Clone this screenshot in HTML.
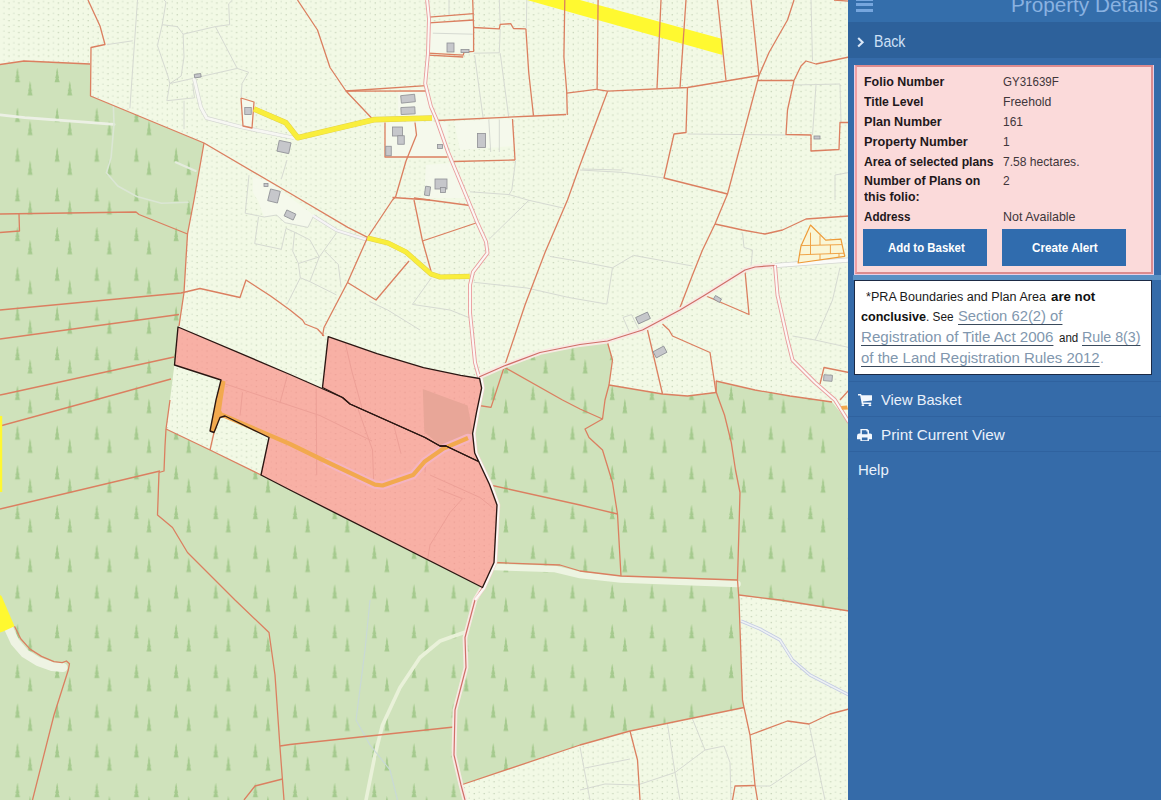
<!DOCTYPE html>
<html lang="en"><head><meta charset="utf-8"><title>Property Details</title>
<style>
html,body{margin:0;padding:0;}
body{width:1161px;height:800px;overflow:hidden;position:relative;background:#f2f9e5;font-family:"Liberation Sans",sans-serif;}
#panel{position:absolute;left:848px;top:0;width:313px;height:800px;background:#356ba9;overflow:hidden;}
#panel .t{position:absolute;white-space:nowrap;transform-origin:0 50%;display:block;}
#panel .box{position:absolute;box-sizing:border-box;}
</style></head><body>
<svg width="849" height="800" viewBox="0 0 849 800" style="position:absolute;left:0;top:0;display:block">
<defs>
<pattern id="dots" width="9.9" height="5.9" patternUnits="userSpaceOnUse" x="6.7" y="0.4">
<rect x="1.6" y="2" width="1.4" height="1.2" fill="#c5d4b7"/><rect x="6.5" y="0.6" width="1.4" height="1.2" fill="#d6e1cb"/>
</pattern>
<pattern id="pdots" width="9.9" height="5.9" patternUnits="userSpaceOnUse" x="6.7" y="0.4"><rect x="1.6" y="2" width="1.4" height="1.2" fill="#eb9f95"/><rect x="6.5" y="0.6" width="1.4" height="1.2" fill="#f2a89e"/></pattern>
<pattern id="trees" width="39.65" height="39.72" patternUnits="userSpaceOnUse" x="-2.5" y="28.4">
<path d="M20,-0.5 L21.2,5.2 L20.7,5.2 L22,9.9 L21.3,9.9 L22.6,14.2 L17.4,14.2 L18.7,9.9 L18,9.9 L19.3,5.2 L18.8,5.2 Z" fill="#a5ca8e"/>
<path d="M32.6,12.6 L33.8,18.3 L33.3,18.3 L34.6,23 L33.9,23 L35.2,27.3 L30,27.3 L31.3,23 L30.6,23 L31.9,18.3 L31.4,18.3 Z" fill="#a5ca8e"/>
</pattern>
</defs>
<rect width="849" height="800" fill="#f2f9e5"/>
<rect width="849" height="800" fill="url(#dots)"/>
<polygon points="385,122.5 447.5,122 447.5,157 385,157" fill="#f5f9ec"/>
<polygon points="429,22.5 474,20 474,52.5 429,52.5" fill="#f5f9ec"/>
<polygon points="454,121 512.5,119 514,146 460,150" fill="#f5f9ec"/>
<polygon points="398,92 424,88 432,117 398,117" fill="#f5f9ec"/>
<polygon points="252.8,177 268,181 313.6,215 307.9,227.4 285,222.7 276.5,215 264.2,217 258.5,201.8 252.8,192.3" fill="#f5f9ec"/>
<polygon points="426,165 452,163 466,198 424,198" fill="#f5f9ec"/>
<polygon points="241,98 254,102 252,128 243,126" fill="#f5f9ec"/>
<polygon points="0,64.5 24,61 90,64 90.5,96 204,143 194,200 187.5,234 184,292.5 179,326 175,360 170,400 166,429 210,450 261,475 290,490 482.5,587.5 494,562.5 497,505 490,485 479,461 472,434 478,406 481,390 480,378 482,376 504,366 540,352.5 580,345 607.5,342 612.5,360 609,385 662.5,394 687.5,396 716,392.5 716,381 755,390 790,396 832,402 849,423 849,611 770,600 739,595 739,600 742.5,700 744,707.5 630,731 580,745 461,785 465,800 0,800" fill="#cfe2bb"/>
<polygon points="0,64.5 24,61 90,64 90.5,96 204,143 194,200 187.5,234 184,292.5 179,326 175,360 170,400 166,429 210,450 261,475 290,490 482.5,587.5 494,562.5 497,505 490,485 479,461 472,434 478,406 481,390 480,378 482,376 504,366 540,352.5 580,345 607.5,342 612.5,360 609,385 662.5,394 687.5,396 716,392.5 716,381 755,390 790,396 832,402 849,423 849,611 770,600 739,595 739,600 742.5,700 744,707.5 630,731 580,745 461,785 465,800 0,800" fill="url(#trees)"/>
<polyline points="137.5,0 129.9,108.3" fill="none" stroke="#d6dad2" stroke-width="1" />
<polyline points="164.1,0 166,2 162.2,24.7 157.4,45.6 167.9,76 169.8,83.6 166.9,100.7 194.5,97.8 192.6,83.6" fill="none" stroke="#d6dad2" stroke-width="1" />
<polyline points="162.2,24.7 177.4,26.6 183.1,34.2 184,57 181.2,76 169.8,83.6" fill="none" stroke="#d6dad2" stroke-width="1" />
<polyline points="183.1,34.2 215.4,26.6 229.6,24.7 228.7,3.8 232.5,0" fill="none" stroke="#d6dad2" stroke-width="1" />
<polyline points="215.4,26.6 237.2,68.4 248.6,72.2 242,83.6 241,97.8" fill="none" stroke="#d6dad2" stroke-width="1" />
<polyline points="169.8,83.6 237.2,68.4" fill="none" stroke="#d6dad2" stroke-width="1" />
<polyline points="184,100.7 184,129.2" fill="none" stroke="#d6dad2" stroke-width="1" />
<polyline points="107.1,44.6 132.7,40.8" fill="none" stroke="#d6dad2" stroke-width="1" />
<polyline points="811,0 812.5,61" fill="none" stroke="#d6dad2" stroke-width="1" />
<polyline points="473.6,53.2 499.3,52.8 500.2,28.9" fill="none" stroke="#d6dad2" stroke-width="1" />
<polyline points="474.6,55.1 483.1,117.8" fill="none" stroke="#d6dad2" stroke-width="1" />
<polyline points="499.3,0 500.2,24.3" fill="none" stroke="#d6dad2" stroke-width="1" />
<polyline points="500.2,53.2 508.8,117.8" fill="none" stroke="#d6dad2" stroke-width="1" />
<polyline points="526.8,0 526.3,28.5" fill="none" stroke="#d6dad2" stroke-width="1" />
<polyline points="488.8,119.7 490.7,152" fill="none" stroke="#d6dad2" stroke-width="1" />
<polyline points="499.3,119.7 499.3,152" fill="none" stroke="#d6dad2" stroke-width="1" />
<polyline points="449,0 449,15" fill="none" stroke="#d6dad2" stroke-width="1" />
<polyline points="432.8,33.2 472.7,34.2" fill="none" stroke="#d6dad2" stroke-width="1" />
<polyline points="794,85 840,84 841,122" fill="none" stroke="#d6dad2" stroke-width="1" />
<polyline points="816,85 812.5,135" fill="none" stroke="#d6dad2" stroke-width="1" />
<polyline points="687.5,134 786,135" fill="none" stroke="#d6dad2" stroke-width="1" />
<polyline points="580,170 625,172.5 664,178" fill="none" stroke="#d6dad2" stroke-width="1" />
<polyline points="835,200 835,175 849,172.5" fill="none" stroke="#d6dad2" stroke-width="1" />
<polyline points="580,261.5 612.5,267.8 633.4,255.4 692.5,266" fill="none" stroke="#d6dad2" stroke-width="1" />
<polyline points="742.5,232.5 744,247.5 752.5,250 751,266" fill="none" stroke="#d6dad2" stroke-width="1" />
<polyline points="840,267.5 832.5,300 817.5,335 815,340 792.5,336" fill="none" stroke="#d6dad2" stroke-width="1" />
<polyline points="815,340 849,347.5" fill="none" stroke="#d6dad2" stroke-width="1" />
<polyline points="667.5,724 675,772.5 680,800" fill="none" stroke="#d6dad2" stroke-width="1" />
<polyline points="692.5,719 705,750" fill="none" stroke="#d6dad2" stroke-width="1" />
<polyline points="675,772.5 705,750 724,746 730,762.5 731,800" fill="none" stroke="#d6dad2" stroke-width="1" />
<polyline points="580,747 590,800" fill="none" stroke="#d6dad2" stroke-width="1" />
<polyline points="585,768 630,759" fill="none" stroke="#d6dad2" stroke-width="1" />
<polyline points="580,790 605,784 637.5,785 675,772.5" fill="none" stroke="#d6dad2" stroke-width="1" />
<polyline points="809,724 825,800" fill="none" stroke="#d6dad2" stroke-width="1" />
<polyline points="755,786 770,786 815,756" fill="none" stroke="#d6dad2" stroke-width="1" />
<polyline points="287,160 281.3,179" fill="none" stroke="#d6dad2" stroke-width="1" />
<polyline points="249,175.2 245.2,213.2 264.2,217 276.5,215 285,222.7 307.9,227.4 313.6,216" fill="none" stroke="#d6dad2" stroke-width="1" />
<polyline points="258.5,217 254.7,243.6 281.3,249.3 286,228.4" fill="none" stroke="#d6dad2" stroke-width="1" />
<polyline points="286,228.4 294.6,232.2 309.8,239.8 319.3,256.9" fill="none" stroke="#d6dad2" stroke-width="1" />
<polyline points="294.6,232.2 292.7,251.2 298.4,263.5 319.3,256.9 336.4,233.1" fill="none" stroke="#d6dad2" stroke-width="1" />
<polyline points="298.4,263.5 300.3,277.8 287,304.4" fill="none" stroke="#d6dad2" stroke-width="1" />
<polyline points="319.3,256.9 309.8,281.6 336.4,294.9" fill="none" stroke="#d6dad2" stroke-width="1" />
<polyline points="325,251.2 338.3,264.5 341.1,287.3" fill="none" stroke="#d6dad2" stroke-width="1" />
<polyline points="300.3,277.8 309.8,281.6" fill="none" stroke="#d6dad2" stroke-width="1" />
<polyline points="369.6,301.5 387.7,310 420,330" fill="none" stroke="#d6dad2" stroke-width="1" />
<polyline points="431.4,277.8 412.4,304.4 450,310 470,318" fill="none" stroke="#d6dad2" stroke-width="1" />
<polyline points="515.6,160.4 511.8,190 509,194.6" fill="none" stroke="#d6dad2" stroke-width="1" />
<polyline points="470,191.8 509,194.6 528.9,200.3 563.1,208" fill="none" stroke="#d6dad2" stroke-width="1" />
<polyline points="528.9,200.3 489,239.3" fill="none" stroke="#d6dad2" stroke-width="1" />
<polyline points="549.8,256.4 580,261.5" fill="none" stroke="#d6dad2" stroke-width="1" />
<polyline points="612.5,267.8 606.8,304.1 568.8,297.5 527,288 473.8,282.3" fill="none" stroke="#d6dad2" stroke-width="1" />
<polyline points="582.1,169 622,170" fill="none" stroke="#d6dad2" stroke-width="1" />
<polyline points="623,317.4 631.5,314.6 639,329.8 629.6,332.6 623,317.4" fill="none" stroke="#d6dad2" stroke-width="1" />
<polyline points="194.2,79 200.9,107.5 206.6,118 242.7,127.4 294,137.9" fill="none" stroke="#d4d6d2" stroke-width="4.0" stroke-linejoin="round"/>
<polyline points="194.2,79 200.9,107.5 206.6,118 242.7,127.4 294,137.9" fill="none" stroke="#f7f7f3" stroke-width="2.8" stroke-linecap="round" stroke-linejoin="round"/>
<polyline points="0,114.8 24.7,117.7 81.7,121.9 114,124.3" fill="none" stroke="#ecf0e5" stroke-width="2.8" stroke-linecap="round" stroke-linejoin="round"/>
<polyline points="113.4,106.3 114,124.3 111.1,157.6 106.4,172.8 117.8,186 136.8,196.5 161.5,203.2 188,202.2" fill="none" stroke="#dbe6d4" stroke-width="1.6" stroke-linecap="round" stroke-linejoin="round"/>
<polyline points="175.7,162.3 195.7,170.9" fill="none" stroke="#e4ebdd" stroke-width="2.2" stroke-linecap="round" stroke-linejoin="round"/>
<polyline points="775,265.5 849,260" fill="none" stroke="#d4d6d2" stroke-width="4.8" stroke-linejoin="round"/>
<polyline points="775,265.5 849,260" fill="none" stroke="#fbfbf8" stroke-width="3.6" stroke-linecap="round" stroke-linejoin="round"/>
<polyline points="494,567 555,569 580,575 621,579.5 737.5,584" fill="none" stroke="#edf4e1" stroke-width="6.5" stroke-linecap="round" stroke-linejoin="round"/>
<polyline points="9,629 15,642 25,653.5 38,661.5 52,666.5 63,667.5" fill="none" stroke="#eef3e3" stroke-width="9" stroke-linecap="round" stroke-linejoin="round"/>
<polyline points="464,632.5 440,641 420,657.5 400,687.5 382.5,725 375,755 366,800" fill="none" stroke="#e9f1d9" stroke-width="3.6" stroke-linecap="round" stroke-linejoin="round"/>
<polyline points="313.6,216 336.4,230.3 366.8,239.8" fill="none" stroke="#d4d6d2" stroke-width="3.4000000000000004" stroke-linejoin="round"/>
<polyline points="313.6,216 336.4,230.3 366.8,239.8" fill="none" stroke="#f6f4f6" stroke-width="2.2" stroke-linecap="round" stroke-linejoin="round"/>
<polyline points="741,621 760,629 780,640 792.5,660 810,675 849,695" fill="none" stroke="#c4cbe3" stroke-width="3.2" stroke-linejoin="round"/>
<polyline points="741,621 760,629 780,640 792.5,660 810,675 849,695" fill="none" stroke="#eef2f4" stroke-width="1.5000000000000002" stroke-linejoin="round"/>
<polyline points="370,600 365,650 356,720 370,745 390,770 397.5,800" fill="none" stroke="#c9d9d6" stroke-width="1.2" stroke-linejoin="round"/>
<polygon points="527,0 580,15 722.5,55 722.5,39 580,0" fill="#fff930"/>
<polyline points="88,0 100,26 105,44.5 91,47.5 90.5,96 204,143 290,193.3 347.8,227.4 367.6,237.3" fill="none" stroke="#db7f60" stroke-width="1.3" stroke-linejoin="round"/>
<polyline points="0,64.5 24,61 90,64" fill="none" stroke="#db7f60" stroke-width="1.3" stroke-linejoin="round"/>
<polyline points="204,143 194,200 187.5,234 184,292.5 179,326" fill="none" stroke="#db7f60" stroke-width="1.3" stroke-linejoin="round"/>
<polyline points="241,98 254,102 252,128 243,126 241,98" fill="none" stroke="#db7f60" stroke-width="1.3" stroke-linejoin="round"/>
<polyline points="297.5,0 317.5,30 330,67.5 346,91 372.5,119" fill="none" stroke="#db7f60" stroke-width="1.3" stroke-linejoin="round"/>
<polyline points="346,91 426,85.7" fill="none" stroke="#db7f60" stroke-width="1.3" stroke-linejoin="round"/>
<polyline points="346,91.2 427.4,91" fill="none" stroke="#db7f60" stroke-width="1.3" stroke-linejoin="round"/>
<polyline points="385,122.5 385,157 447.5,157" fill="none" stroke="#db7f60" stroke-width="1.3" stroke-linejoin="round"/>
<polyline points="415,122.5 416.5,135 406,161 395.7,196.5 392.5,200 367.5,237.5 347.5,282.5 324,327.5 322.5,336" fill="none" stroke="#db7f60" stroke-width="1.3" stroke-linejoin="round"/>
<polyline points="437.5,120.5 534,116 566,114.5" fill="none" stroke="#db7f60" stroke-width="1.3" stroke-linejoin="round"/>
<polyline points="566.7,93.1 596.2,89.3" fill="none" stroke="#db7f60" stroke-width="1.3" stroke-linejoin="round"/>
<polyline points="512.5,119 515,160" fill="none" stroke="#db7f60" stroke-width="1.3" stroke-linejoin="round"/>
<polyline points="454,161.5 515,160" fill="none" stroke="#db7f60" stroke-width="1.3" stroke-linejoin="round"/>
<polyline points="525.9,28.9 528.7,72.2 533.5,115.9" fill="none" stroke="#db7f60" stroke-width="1.3" stroke-linejoin="round"/>
<polyline points="564.8,0 563.9,57 566.7,91.2 567.3,114.9" fill="none" stroke="#db7f60" stroke-width="1.3" stroke-linejoin="round"/>
<polyline points="472.7,0 473.6,27.5 499.3,28.9 500.2,24.3 510.7,23.7 513.5,28.5 525.9,28.9" fill="none" stroke="#db7f60" stroke-width="1.3" stroke-linejoin="round"/>
<polyline points="429,17.1 473.6,13.7" fill="none" stroke="#db7f60" stroke-width="1.3" stroke-linejoin="round"/>
<polyline points="429,22.8 473.6,20" fill="none" stroke="#db7f60" stroke-width="1.3" stroke-linejoin="round"/>
<polyline points="473.6,27.5 473.6,51.3 464.1,52.2 463.2,55.1 428,53.2" fill="none" stroke="#db7f60" stroke-width="1.3" stroke-linejoin="round"/>
<polyline points="428,55.2 463.2,57" fill="none" stroke="#db7f60" stroke-width="1.3" stroke-linejoin="round"/>
<polyline points="580,165 567.5,200 545,252.5 525,305 504.2,367 491,407.4 479,405.5" fill="none" stroke="#db7f60" stroke-width="1.3" stroke-linejoin="round"/>
<polyline points="392.5,197.5 430,200" fill="none" stroke="#db7f60" stroke-width="1.3" stroke-linejoin="round"/>
<polyline points="598.1,0 597.1,89.3" fill="none" stroke="#db7f60" stroke-width="1.3" stroke-linejoin="round"/>
<polyline points="596.2,89.3 607.6,91.2 687.5,87.5 759,75.5" fill="none" stroke="#db7f60" stroke-width="1.3" stroke-linejoin="round"/>
<polyline points="758,80.5 794,80.5" fill="none" stroke="#db7f60" stroke-width="1.3" stroke-linejoin="round"/>
<polyline points="607.6,91.2 580,165" fill="none" stroke="#db7f60" stroke-width="1.3" stroke-linejoin="round"/>
<polyline points="661,0 657,88.5" fill="none" stroke="#db7f60" stroke-width="1.3" stroke-linejoin="round"/>
<polyline points="686,0 680,88" fill="none" stroke="#db7f60" stroke-width="1.3" stroke-linejoin="round"/>
<polyline points="717.5,0 726,80.5" fill="none" stroke="#db7f60" stroke-width="1.3" stroke-linejoin="round"/>
<polyline points="751,0 759,75.5" fill="none" stroke="#db7f60" stroke-width="1.3" stroke-linejoin="round"/>
<polyline points="794,0 787.5,20 769,52.5 759,75.5 727.5,194 725,200 715,224 702.5,250 692.5,275 680,307.5" fill="none" stroke="#db7f60" stroke-width="1.3" stroke-linejoin="round"/>
<polyline points="687.5,87.5 686,132.5 674,134 664,178 727.5,194" fill="none" stroke="#db7f60" stroke-width="1.3" stroke-linejoin="round"/>
<polyline points="794,80.5 801,66 806,61 816,64 849,57" fill="none" stroke="#db7f60" stroke-width="1.3" stroke-linejoin="round"/>
<polyline points="794,80.5 787.5,110 786,134.5 811,135 811,151 839,149.5 840,122.5 849,122.5" fill="none" stroke="#db7f60" stroke-width="1.3" stroke-linejoin="round"/>
<polyline points="0,214 136,212 139,214.5 187.5,234" fill="none" stroke="#db7f60" stroke-width="1.3" stroke-linejoin="round"/>
<polyline points="19,214 19.5,231 0,232.5" fill="none" stroke="#db7f60" stroke-width="1.3" stroke-linejoin="round"/>
<polyline points="0,310 181,293 200,288.5 240,297.5 246,280 270.6,296 290,310 302.5,320 305,324 317.5,329 324,336" fill="none" stroke="#db7f60" stroke-width="1.3" stroke-linejoin="round"/>
<polyline points="0,339 179,314.5" fill="none" stroke="#db7f60" stroke-width="1.3" stroke-linejoin="round"/>
<polyline points="0,395 5,394 174,357" fill="none" stroke="#db7f60" stroke-width="1.3" stroke-linejoin="round"/>
<polyline points="0,426 95,400 171,379" fill="none" stroke="#db7f60" stroke-width="1.3" stroke-linejoin="round"/>
<polyline points="414,200 422.5,241 431,271" fill="none" stroke="#db7f60" stroke-width="1.3" stroke-linejoin="round"/>
<polyline points="414,198 470,205.5" fill="none" stroke="#db7f60" stroke-width="1.3" stroke-linejoin="round"/>
<polyline points="422.5,241 477.5,222.5" fill="none" stroke="#db7f60" stroke-width="1.3" stroke-linejoin="round"/>
<polyline points="347.5,282.5 376,300 409,261" fill="none" stroke="#db7f60" stroke-width="1.3" stroke-linejoin="round"/>
<polyline points="504,367 562.5,400 580,409 602.5,419" fill="none" stroke="#db7f60" stroke-width="1.3" stroke-linejoin="round"/>
<polyline points="715,224 742.5,230 765,234 782.5,230 806,219 849,216" fill="none" stroke="#db7f60" stroke-width="1.3" stroke-linejoin="round"/>
<polyline points="745,271 749,314.5 705,295.5" fill="none" stroke="#db7f60" stroke-width="1.3" stroke-linejoin="round"/>
<polyline points="647.5,330 662.5,394" fill="none" stroke="#db7f60" stroke-width="1.3" stroke-linejoin="round"/>
<polyline points="662.5,324 669,330 672.5,336 710,352.5 716,392.5" fill="none" stroke="#db7f60" stroke-width="1.3" stroke-linejoin="round"/>
<polyline points="607.5,342.5 612.5,360 609,385 605,400 602.5,419 585,429 589,437.5 602.5,450 612.5,482.5 617.5,514 621,576" fill="none" stroke="#db7f60" stroke-width="1.3" stroke-linejoin="round"/>
<polyline points="609,385 662.5,394 687.5,396 716,392.5" fill="none" stroke="#db7f60" stroke-width="1.3" stroke-linejoin="round"/>
<polyline points="716,381 755,390 790,396 832,402" fill="none" stroke="#db7f60" stroke-width="1.3" stroke-linejoin="round"/>
<polyline points="820,384 824,367.5 849,372.5" fill="none" stroke="#db7f60" stroke-width="1.3" stroke-linejoin="round"/>
<polyline points="849,390 840,400" fill="none" stroke="#db7f60" stroke-width="1.3" stroke-linejoin="round"/>
<polyline points="834,0 849,1.2" fill="none" stroke="#db7f60" stroke-width="1.3" stroke-linejoin="round"/>
<polyline points="170,400 166,429 165,446 164,471 159,472.5 157.5,515 172.5,527.5 187.5,552.5 235,600 269,632.5 275,675 280,747.5 284,800" fill="none" stroke="#db7f60" stroke-width="1.3" stroke-linejoin="round"/>
<polyline points="160,471 0,509" fill="none" stroke="#db7f60" stroke-width="1.3" stroke-linejoin="round"/>
<polyline points="166,429 210,450 261,475" fill="none" stroke="#db7f60" stroke-width="1.3" stroke-linejoin="round"/>
<polyline points="210,450 214,432.5" fill="none" stroke="#db7f60" stroke-width="1.3" stroke-linejoin="round"/>
<polyline points="490,485 580,505 617.5,514" fill="none" stroke="#db7f60" stroke-width="1.3" stroke-linejoin="round"/>
<polyline points="494,562.5 560,565 580,571 621,576 737.5,580" fill="none" stroke="#db7f60" stroke-width="1.3" stroke-linejoin="round"/>
<polyline points="716.2,380.7 716.2,392 719,400 724.5,415 731.3,442.7 735.5,470 740,492.5 737.5,580 739,600 742.5,700 744,707.5 750,735 755,785 757.5,800" fill="none" stroke="#db7f60" stroke-width="1.3" stroke-linejoin="round"/>
<polyline points="739,595 780,600 849,611" fill="none" stroke="#db7f60" stroke-width="1.3" stroke-linejoin="round"/>
<polyline points="280,746 290,744.5 454,727" fill="none" stroke="#db7f60" stroke-width="1.3" stroke-linejoin="round"/>
<polyline points="282.5,779 255,786 244,800" fill="none" stroke="#db7f60" stroke-width="1.3" stroke-linejoin="round"/>
<polyline points="14.5,626.3 20.7,638.8 30,649.1 41.5,656.4 54,661.6 62.2,662.6 66.4,661 69.5,663.7 68.3,670 54,715 32.5,800" fill="none" stroke="#db7f60" stroke-width="1.3" stroke-linejoin="round"/>
<polyline points="461,785 580,745 630,731 744,707.5" fill="none" stroke="#db7f60" stroke-width="1.3" stroke-linejoin="round"/>
<polyline points="630,731 637.5,760 640,800" fill="none" stroke="#db7f60" stroke-width="1.3" stroke-linejoin="round"/>
<polyline points="750,735 787.5,721 809,724 830,714 849,709" fill="none" stroke="#db7f60" stroke-width="1.3" stroke-linejoin="round"/>
<polyline points="732.5,800 735,786 755,785.5" fill="none" stroke="#db7f60" stroke-width="1.3" stroke-linejoin="round"/>
<polyline points="427.1,0 429,19 428,53.2 425.2,83.6 430.9,106.4 436.6,119.7 448,152 469.6,204 477,222 486,241.7 487.5,253 473,272 470,285 470,312.5 475,362.5 479,377" fill="none" stroke="#e99d9d" stroke-width="3.9" stroke-linejoin="round"/>
<polyline points="479,377 504,366 540,352.5 580,344.5 607.5,341 642.5,330 680,310 705,295 745,270 755,267 775,265.5" fill="none" stroke="#f8e9e3" stroke-width="4.8" stroke-linejoin="round"/>
<polyline points="775,265.5 777.5,295 787.5,340 792.5,360 815,382.5 835,400 849,422.5" fill="none" stroke="#e99d9d" stroke-width="3.9" stroke-linejoin="round"/>
<polyline points="482.5,587.5 475,600 465,637.5 466,667.5 455,710 454,755 461,785 465,800" fill="none" stroke="#f8e9e3" stroke-width="4.8" stroke-linejoin="round"/>
<polyline points="481.2,378 483,388 478,411.8 474,433.5 476.1,453 480.1,461.5 491,484.5 498.5,505 495.5,562.5 484,588 475,600" fill="none" stroke="#f3d3cd" stroke-width="3.6" stroke-linejoin="round"/>
<polyline points="427.1,0 429,19 428,53.2 425.2,83.6 430.9,106.4 436.6,119.7 448,152 469.6,204 477,222 486,241.7 487.5,253 473,272 470,285 470,312.5 475,362.5 479,377" fill="none" stroke="#fbf8f5" stroke-width="2.1" stroke-linejoin="round"/>
<polyline points="479,377 504,366 540,352.5 580,344.5 607.5,341 642.5,330 680,310 705,295 745,270 755,267 775,265.5" fill="none" stroke="#cf6e68" stroke-width="1.2" stroke-linejoin="round"/>
<polyline points="775,265.5 777.5,295 787.5,340 792.5,360 815,382.5 835,400 849,422.5" fill="none" stroke="#fbf8f5" stroke-width="2.1" stroke-linejoin="round"/>
<polyline points="482.5,587.5 475,600 465,637.5 466,667.5 455,710 454,755 461,785 465,800" fill="none" stroke="#cf6e68" stroke-width="1.2" stroke-linejoin="round"/>
<polyline points="481.2,378 483,388 478,411.8 474,433.5 476.1,453 480.1,461.5 491,484.5 498.5,505 495.5,562.5 484,588 475,600" fill="none" stroke="#fcf9f6" stroke-width="2.4" stroke-linejoin="round"/>
<polyline points="254,109 285.7,122.6 297.7,137.7 374.6,119.6 432,118" fill="none" stroke="#e3d24a" stroke-width="5.6" stroke-linejoin="round"/>
<polyline points="367.5,238 388,243 406,252 431,274 440,277 469.6,276.4" fill="none" stroke="#e3d24a" stroke-width="5.1" stroke-linejoin="round"/>
<polyline points="254,109 285.7,122.6 297.7,137.7 374.6,119.6 432,118" fill="none" stroke="#f9ee3c" stroke-width="4.7" stroke-linejoin="round"/>
<polyline points="367.5,238 388,243 406,252 431,274 440,277 469.6,276.4" fill="none" stroke="#f9ee3c" stroke-width="4.2" stroke-linejoin="round"/>
<rect x="0" y="416" width="2.2" height="76" fill="#fff830"/>
<polygon points="0,595 1.5,596 14.5,626.3 3,631.5 0,632.5" fill="#fff830"/>
<rect x="244.75" y="107.5" width="6.5" height="7" fill="#c6c7cb" stroke="#8e9095" stroke-width="0.8" transform="rotate(0 248 111)"/>
<rect x="194.45" y="73.95" width="6.5" height="3.5" fill="#c6c7cb" stroke="#8e9095" stroke-width="0.8" transform="rotate(-8 197.7 75.7)"/>
<rect x="278" y="141.5" width="12" height="11" fill="#c6c7cb" stroke="#8e9095" stroke-width="0.8" transform="rotate(12 284 147)"/>
<rect x="269" y="190" width="10" height="12" fill="#c6c7cb" stroke="#8e9095" stroke-width="0.8" transform="rotate(14 274 196)"/>
<rect x="285" y="211.75" width="10" height="6.5" fill="#c6c7cb" stroke="#8e9095" stroke-width="0.8" transform="rotate(25 290 215)"/>
<rect x="264" y="183.5" width="4" height="3" fill="#c6c7cb" stroke="#8e9095" stroke-width="0.8" transform="rotate(0 266 185)"/>
<rect x="401" y="94.95" width="14" height="7.5" fill="#c6c7cb" stroke="#8e9095" stroke-width="0.8" transform="rotate(-6 408 98.7)"/>
<rect x="401" y="107.2" width="14" height="7" fill="#c6c7cb" stroke="#8e9095" stroke-width="0.8" transform="rotate(-3 408 110.7)"/>
<rect x="392.5" y="127" width="10" height="9" fill="#c6c7cb" stroke="#8e9095" stroke-width="0.8" transform="rotate(0 397.5 131.5)"/>
<rect x="397.75" y="135.75" width="6.5" height="8.5" fill="#c6c7cb" stroke="#8e9095" stroke-width="0.8" transform="rotate(0 401 140)"/>
<rect x="385.75" y="146.25" width="5.5" height="9.5" fill="#c6c7cb" stroke="#8e9095" stroke-width="0.8" transform="rotate(0 388.5 151)"/>
<rect x="477.5" y="133.5" width="8" height="14" fill="#c6c7cb" stroke="#8e9095" stroke-width="0.8" transform="rotate(0 481.5 140.5)"/>
<rect x="447" y="43" width="7" height="9" fill="#c6c7cb" stroke="#8e9095" stroke-width="0.8" transform="rotate(0 450.5 47.5)"/>
<rect x="461" y="49.5" width="8" height="3" fill="#c6c7cb" stroke="#8e9095" stroke-width="0.8" transform="rotate(0 465 51)"/>
<rect x="435" y="179" width="12" height="10" fill="#c6c7cb" stroke="#8e9095" stroke-width="0.8" transform="rotate(0 441 184)"/>
<rect x="440.5" y="187.5" width="5" height="5" fill="#c6c7cb" stroke="#8e9095" stroke-width="0.8" transform="rotate(0 443 190)"/>
<rect x="425" y="186.5" width="5" height="9" fill="#c6c7cb" stroke="#8e9095" stroke-width="0.8" transform="rotate(8 427.5 191)"/>
<rect x="437.5" y="144.5" width="5" height="4" fill="#c6c7cb" stroke="#8e9095" stroke-width="0.8" transform="rotate(0 440 146.5)"/>
<rect x="814" y="136" width="6" height="3" fill="#c6c7cb" stroke="#8e9095" stroke-width="0.8" transform="rotate(0 817 137.5)"/>
<rect x="636.5" y="314.5" width="13" height="7" fill="#c6c7cb" stroke="#8e9095" stroke-width="0.8" transform="rotate(-25 643 318)"/>
<rect x="654" y="348.5" width="12" height="7" fill="#c6c7cb" stroke="#8e9095" stroke-width="0.8" transform="rotate(-28 660 352)"/>
<rect x="714" y="297" width="7" height="4" fill="#c6c7cb" stroke="#8e9095" stroke-width="0.8" transform="rotate(30 717.5 299)"/>
<rect x="823.75" y="375" width="8.5" height="6" fill="#c6c7cb" stroke="#8e9095" stroke-width="0.8" transform="rotate(5 828 378)"/>
<polygon points="810.5,225 825.7,240.2 840.9,239.2 844.7,256.3 798.1,263 801,245.9" fill="#f9f6d6" stroke="#ee9b38" stroke-width="1.2" stroke-linejoin="round"/>
<polyline points="801,245.6 842,244.6" fill="none" stroke="#ee9b38" stroke-width="0.9" />
<polyline points="799.5,254.8 844.3,253.2" fill="none" stroke="#ee9b38" stroke-width="0.9" />
<polyline points="810.5,232.6 810.5,245" fill="none" stroke="#ee9b38" stroke-width="0.9" />
<polyline points="820,235.4 820,245" fill="none" stroke="#ee9b38" stroke-width="0.9" />
<polyline points="810.5,245.3 810.5,254.4" fill="none" stroke="#ee9b38" stroke-width="0.9" />
<polyline points="830.4,245 830.4,253.8" fill="none" stroke="#ee9b38" stroke-width="0.9" />
<polyline points="820,254.2 820,260" fill="none" stroke="#ee9b38" stroke-width="0.9" />
<polyline points="839,253.5 839,257" fill="none" stroke="#ee9b38" stroke-width="0.9" />
<polygon points="841,406 847,405.4 848,409.6 842,409.8" fill="#f2a94e"/>
<polygon points="178,327 290,374.5 342.5,397.5 350,404 425,437.5 440,446 446,446 477.5,461 478.7,461.5 489.5,484.5 497,505 494,562.5 482.5,587.5 290,490 261,475 269,437.5 225,416 220,417.5 214,432.5 210,431 216,400 221,380 174.5,365" fill="#f8b0a5"/>
<polygon points="328.2,336.6 377,353.7 423.5,367.6 460.7,375.4 479.6,378.5 481.6,388 476.6,411.8 472.6,433.5 474.7,453 478.7,461.5 477.5,461 446,446 440,446 425,437.5 350,404 342.5,397.5 322.5,387.5" fill="#f8b0a5"/>
<polygon points="178,327 290,374.5 342.5,397.5 350,404 425,437.5 440,446 446,446 477.5,461 478.7,461.5 489.5,484.5 497,505 494,562.5 482.5,587.5 290,490 261,475 269,437.5 225,416 220,417.5 214,432.5 210,431 216,400 221,380 174.5,365" fill="url(#pdots)"/>
<polygon points="328.2,336.6 377,353.7 423.5,367.6 460.7,375.4 479.6,378.5 481.6,388 476.6,411.8 472.6,433.5 474.7,453 478.7,461.5 477.5,461 446,446 440,446 425,437.5 350,404 342.5,397.5 322.5,387.5" fill="url(#pdots)"/>
<polygon points="422.8,388.9 467.6,405.5 472.9,433 462.2,437.4 445.4,443.8 441.5,446.5 424.3,432" fill="#e8a698"/>
<polyline points="223.9,383.5 320,415.6 372,441" fill="none" stroke="#eda097" stroke-width="1" />
<polyline points="242.5,392.3 240,415.6" fill="none" stroke="#eda097" stroke-width="1" />
<polyline points="287.1,376.2 279.9,403.2" fill="none" stroke="#eda097" stroke-width="1" />
<polyline points="316.2,388.7 316.7,475" fill="none" stroke="#eda097" stroke-width="1" />
<polyline points="357.5,407.5 372.5,450 373.7,482.5" fill="none" stroke="#eda097" stroke-width="1" />
<polyline points="393.7,425 401,453.7" fill="none" stroke="#eda097" stroke-width="1" />
<polyline points="430,475 480,497.5 492.5,507.5" fill="none" stroke="#eda097" stroke-width="1" />
<polyline points="437.5,488.7 462.5,498.7 450,512.5 430,545 427.5,560" fill="none" stroke="#eda097" stroke-width="1" />
<polyline points="425,472.5 426,457.5" fill="none" stroke="#eda097" stroke-width="1" />
<polyline points="345,342 352,372 362,408" fill="none" stroke="#eda097" stroke-width="1" />
<polyline points="327,462 375,484.6 382.6,485.5 413,475.1 424.4,461.8 443.4,448.5 468,438" fill="none" stroke="#f4b4c0" stroke-width="8.5" stroke-linejoin="round" stroke-linecap="round"/>
<polyline points="219,411 221,414.5 226,416.5 290,444 327,462 375,484.6 382.6,485.5 413,475.1 424.4,461.8 443.4,448.5 468,438" fill="none" stroke="#f2a94e" stroke-width="4.2" stroke-linejoin="round"/>
<polygon points="216,400 221,380 225.5,381.5 222.5,400 220.5,414 216,430 214,432.5 210,431" fill="#f2a94e"/>
<polygon points="178,327 290,374.5 342.5,397.5 350,404 425,437.5 440,446 446,446 477.5,461 478.7,461.5 489.5,484.5 497,505 494,562.5 482.5,587.5 290,490 261,475 269,437.5 225,416 220,417.5 214,432.5 210,431 216,400 221,380 174.5,365" fill="none" stroke="#2a1612" stroke-width="1.35" stroke-linejoin="round"/>
<polygon points="328.2,336.6 377,353.7 423.5,367.6 460.7,375.4 479.6,378.5 481.6,388 476.6,411.8 472.6,433.5 474.7,453 478.7,461.5 477.5,461 446,446 440,446 425,437.5 350,404 342.5,397.5 322.5,387.5" fill="none" stroke="#2a1612" stroke-width="1.35" stroke-linejoin="round"/>
</svg>
<div id="panel">
<div class="box" style="left:0;top:0;width:313px;height:22px;background:#346eab"></div>
<div class="box" style="left:0;top:22px;width:313px;height:36px;background:#2d619b"></div>
<div class="box" style="left:8px;top:-3px;width:17.3px;height:3.6px;background:#76a6de"></div>
<div class="box" style="left:8px;top:3.1px;width:17.3px;height:3px;background:#76a6de"></div>
<div class="box" style="left:8px;top:9.1px;width:17.3px;height:2.8px;background:#76a6de"></div>
<svg width="8" height="11" viewBox="0 0 8 11" style="position:absolute;left:9px;top:36.5px"><path d="M1.2,1 L5.6,5.2 L1.2,9.4" fill="none" stroke="#dbe8f8" stroke-width="2.1"/></svg>
<div class="box" style="left:6px;top:64.5px;width:300px;height:210.5px;background:#e6cfe6"></div>
<div class="box" style="left:6.6px;top:65.4px;width:298.6px;height:208.6px;background:#fbdada;border:2.2px solid #dc8b8e;border-left-color:#f0a0a3"></div>
<div class="box" style="left:15px;top:229px;width:124px;height:37px;background:#306cae"></div>
<div class="box" style="left:154px;top:229px;width:124px;height:37px;background:#306cae"></div>
<div class="box" style="left:5px;top:275px;width:308px;height:5px;background:#5a91c4"></div>
<div class="box" style="left:6.3px;top:280px;width:297.4px;height:94.6px;background:#fff;border:1.2px solid #1b2a45"></div>
<div class="box" style="left:1px;top:381px;width:312px;height:1px;background:#2f629f"></div>
<div class="box" style="left:1px;top:416px;width:312px;height:1px;background:#2f629f"></div>
<div class="box" style="left:1px;top:451px;width:312px;height:1px;background:#2f629f"></div>
<svg width="14.4" height="12.4" viewBox="0 0 14.4 12.4" style="position:absolute;left:9.8px;top:394px"><path d="M0,0 H3 L3.7,1.3 H14.4 V6.4 L5,7.6 L5.2,8.6 H13.2 V10 H3.8 L2.2,1.4 H0 Z" fill="#f4f8fd"/><rect x="3.6" y="10.2" width="2.6" height="2.2" rx="0.8" fill="#f4f8fd"/><rect x="10.6" y="10.2" width="2.6" height="2.2" rx="0.8" fill="#f4f8fd"/></svg>
<svg width="15.4" height="12.6" viewBox="0 0 15.4 12.6" style="position:absolute;left:9px;top:428.5px"><path d="M3.4,0 H10.2 L12,1.6 V4.6 H13 Q15.4,4.6 15.4,7 V10.2 H12 V12.6 H3.4 V10.2 H0 V7 Q0,4.6 2.4,4.6 H3.4 Z M4.9,1.3 V5.3 H10.5 V2.4 H9.4 V1.3 Z M4.9,8.6 V11.3 H10.5 V8.6 Z" fill="#f4f8fd" fill-rule="evenodd"/></svg>
<span class="t" style="left:16.25px;top:75.20px;font-size:13px;line-height:13px;font-weight:bold;color:#1f181b;transform:scaleX(0.9579);">Folio Number</span>
<span class="t" style="left:155.00px;top:75.20px;font-size:13px;line-height:13px;color:#40363a;transform:scaleX(0.8868);">GY31639F</span>
<span class="t" style="left:16.25px;top:95.20px;font-size:13px;line-height:13px;font-weight:bold;color:#1f181b;transform:scaleX(0.9394);">Title Level</span>
<span class="t" style="left:155.00px;top:95.20px;font-size:13px;line-height:13px;color:#40363a;transform:scaleX(0.9405);">Freehold</span>
<span class="t" style="left:16.25px;top:115.20px;font-size:13px;line-height:13px;font-weight:bold;color:#1f181b;transform:scaleX(0.9697);">Plan Number</span>
<span class="t" style="left:155.00px;top:115.20px;font-size:13px;line-height:13px;color:#40363a;transform:scaleX(0.9200);">161</span>
<span class="t" style="left:16.25px;top:135.20px;font-size:13px;line-height:13px;font-weight:bold;color:#1f181b;transform:scaleX(0.9770);">Property Number</span>
<span class="t" style="left:155.00px;top:135.20px;font-size:13px;line-height:13px;color:#40363a;transform:scaleX(0.9200);">1</span>
<span class="t" style="left:16.25px;top:154.70px;font-size:13px;line-height:13px;font-weight:bold;color:#1f181b;transform:scaleX(0.9385);">Area of selected plans</span>
<span class="t" style="left:155.00px;top:154.70px;font-size:13px;line-height:13px;color:#40363a;transform:scaleX(0.9286);">7.58 hectares.</span>
<span class="t" style="left:16.25px;top:174.40px;font-size:13px;line-height:13px;font-weight:bold;color:#1f181b;transform:scaleX(0.9468);">Number of Plans on</span>
<span class="t" style="left:155.00px;top:174.40px;font-size:13px;line-height:13px;color:#40363a;transform:scaleX(0.9200);">2</span>
<span class="t" style="left:16.25px;top:189.70px;font-size:13px;line-height:13px;font-weight:bold;color:#1f181b;transform:scaleX(0.9500);">this folio:</span>
<span class="t" style="left:16.25px;top:210.20px;font-size:13px;line-height:13px;font-weight:bold;color:#1f181b;transform:scaleX(0.8940);">Address</span>
<span class="t" style="left:155.00px;top:210.20px;font-size:13px;line-height:13px;color:#40363a;transform:scaleX(0.9585);">Not Available</span>
<span class="t" style="left:39.50px;top:240.90px;font-size:13px;line-height:13px;font-weight:bold;color:#ffffff;transform:scaleX(0.8782);">Add to Basket</span>
<span class="t" style="left:183.75px;top:240.90px;font-size:13px;line-height:13px;font-weight:bold;color:#ffffff;transform:scaleX(0.8981);">Create Alert</span>
<span class="t" style="left:18.25px;top:290.53px;font-size:12px;line-height:12px;color:#1a1a1a;transform:scaleX(1.0499);">*PRA Boundaries and Plan Area</span>
<span class="t" style="left:202.75px;top:290.53px;font-size:12px;line-height:12px;font-weight:bold;color:#111;transform:scaleX(1.1061);">are not</span>
<span class="t" style="left:13.25px;top:311.03px;font-size:12px;line-height:12px;font-weight:bold;color:#111;transform:scaleX(1.0480);">conclusive</span>
<span class="t" style="left:78.30px;top:311.03px;font-size:12px;line-height:12px;color:#1a1a1a;transform:scaleX(0.9815);">. See</span>
<span class="t" style="left:110.00px;top:308.87px;font-size:14.6px;line-height:14.6px;color:#8197ae;transform:scaleX(1.0139);text-decoration:underline;text-decoration-color:#3a4a5c;text-underline-offset:2.5px;text-decoration-thickness:1px;">Section 62(2) of</span>
<span class="t" style="left:13.25px;top:330.17px;font-size:14.6px;line-height:14.6px;color:#8197ae;transform:scaleX(1.0358);text-decoration:underline;text-decoration-color:#3a4a5c;text-underline-offset:2.5px;text-decoration-thickness:1px;">Registration of Title Act 2006</span>
<span class="t" style="left:210.75px;top:332.33px;font-size:12px;line-height:12px;color:#1a1a1a;transform:scaleX(0.9616);">and</span>
<span class="t" style="left:234.40px;top:330.17px;font-size:14.6px;line-height:14.6px;color:#8197ae;transform:scaleX(0.9743);text-decoration:underline;text-decoration-color:#3a4a5c;text-underline-offset:2.5px;text-decoration-thickness:1px;">Rule 8(3)</span>
<span class="t" style="left:13.25px;top:350.87px;font-size:14.6px;line-height:14.6px;color:#8197ae;transform:scaleX(1.0250);text-decoration:underline;text-decoration-color:#3a4a5c;text-underline-offset:2.5px;text-decoration-thickness:1px;">of the Land Registration Rules 2012</span>
<span class="t" style="left:252.20px;top:353.03px;font-size:12px;line-height:12px;color:#8197ae;transform:scaleX(1.0000);">.</span>
<span class="t" style="left:33.25px;top:391.94px;font-size:15px;line-height:15px;color:#eaf1fb;transform:scaleX(0.9786);">View Basket</span>
<span class="t" style="left:33.25px;top:427.04px;font-size:15px;line-height:15px;color:#eaf1fb;transform:scaleX(1.0191);">Print Current View</span>
<span class="t" style="left:10.00px;top:461.54px;font-size:15px;line-height:15px;color:#eaf1fb;transform:scaleX(0.9968);">Help</span>
<span class="t" style="left:25.80px;top:33.36px;font-size:16.3px;line-height:16.3px;color:#cfe0f6;transform:scaleX(0.8665);">Back</span>
<span class="t" style="left:162.50px;top:-5.01px;font-size:20px;line-height:20px;color:#8ab2e1;transform:scaleX(1.0347);">Property Details</span>
</div>
</body></html>
